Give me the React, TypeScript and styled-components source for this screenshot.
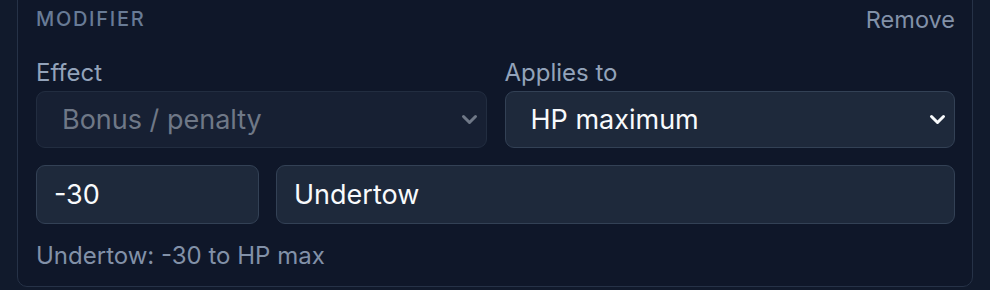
import styled, { createGlobalStyle } from 'styled-components'

const GlobalStyle = createGlobalStyle`
	html, body {
		margin: 0;
		padding: 0;
		background: #111a2c;
		overflow: hidden;
	}
	body {
		font-family: Inter, "Noto Sans", "Liberation Sans", sans-serif;
		-webkit-font-smoothing: antialiased;
	}
	* {
		box-sizing: border-box;
	}
`

type FieldProps = {
	$muted?: boolean
}

function Chevron({ color }: { color: string }) {
	return (
		<svg width='17' height='17' viewBox='0 0 17 17' fill='none'>
			<path
				d='M2.5 5.5L8.5 11.5L14.5 5.5'
				stroke={color}
				strokeWidth='3'
				strokeLinecap='round'
				strokeLinejoin='round'
			/>
		</svg>
	)
}

export default function App() {
	return (
		<>
			<GlobalStyle />
			<Page>
				<Card>
					<Header>
						<Title>Modifier</Title>
						<RemoveButton>Remove</RemoveButton>
					</Header>
					<SelectRow>
						<Field>
							<Label>Effect</Label>
							<SelectBox $muted>
								<span>Bonus / penalty</span>
								<Chevron color='#6f7887' />
							</SelectBox>
						</Field>
						<Field>
							<Label>Applies to</Label>
							<SelectBox>
								<span>HP maximum</span>
								<Chevron color='#f8fafc' />
							</SelectBox>
						</Field>
					</SelectRow>
					<InputRow>
						<TextInput defaultValue='-30' />
						<TextInput defaultValue='Undertow' />
					</InputRow>
					<Summary>Undertow: -30 to HP max</Summary>
				</Card>
			</Page>
		</>
	)
}

const Page = styled.div`
	display: flow-root;
	width: 990px;
	padding: 0 17px;
`

const Card = styled.section`
	margin-top: -13px;
	background: #0f1729;
	border: 1px solid #263247;
	border-radius: 10px;
	padding: 18px 17px 15px 18px;
`

const Header = styled.div`
	display: flex;
	justify-content: space-between;
	align-items: center;
	height: 26px;
	margin-bottom: 26px;
`

const Title = styled.h3`
	margin: 0;
	font-size: 20px;
	font-weight: 500;
	letter-spacing: 0.085em;
	text-transform: uppercase;
	color: #687b96;
`

const RemoveButton = styled.button`
	background: none;
	border: none;
	padding: 0;
	font-family: inherit;
	font-size: 23.5px;
	font-weight: 400;
	color: #8291a8;
	cursor: pointer;
`

const SelectRow = styled.div`
	display: grid;
	grid-template-columns: 1fr 1fr;
	gap: 18px;
`

const Field = styled.div`
	display: flex;
	flex-direction: column;
	gap: 3px;
`

const Label = styled.label`
	font-size: 24px;
	line-height: 30px;
	color: #93a3ba;
`

const SelectBox = styled.div<FieldProps>`
	display: flex;
	align-items: center;
	justify-content: space-between;
	height: 57px;
	padding: 0 8px 0 25px;
	border-radius: 9px;
	font-size: 27px;
	font-weight: 400;
	background: ${(p) => (p.$muted ? '#172033' : '#1e293b')};
	border: 1px solid ${(p) => (p.$muted ? '#222d40' : '#334155')};
	color: ${(p) => (p.$muted ? '#6f7887' : '#f8fafc')};
`

const InputRow = styled.div`
	display: grid;
	grid-template-columns: 223px 1fr;
	gap: 17px;
	margin-top: 17px;
`

const TextInput = styled.input`
	height: 59px;
	padding: 0 17px;
	border-radius: 9px;
	background: #1e293b;
	border: 1px solid #334155;
	color: #f8fafc;
	font-family: inherit;
	font-size: 27px;
	font-weight: 400;
	outline: none;
`

const Summary = styled.p`
	margin: 17px 0 0;
	font-size: 24px;
	line-height: 30px;
	color: #8291a8;
`
